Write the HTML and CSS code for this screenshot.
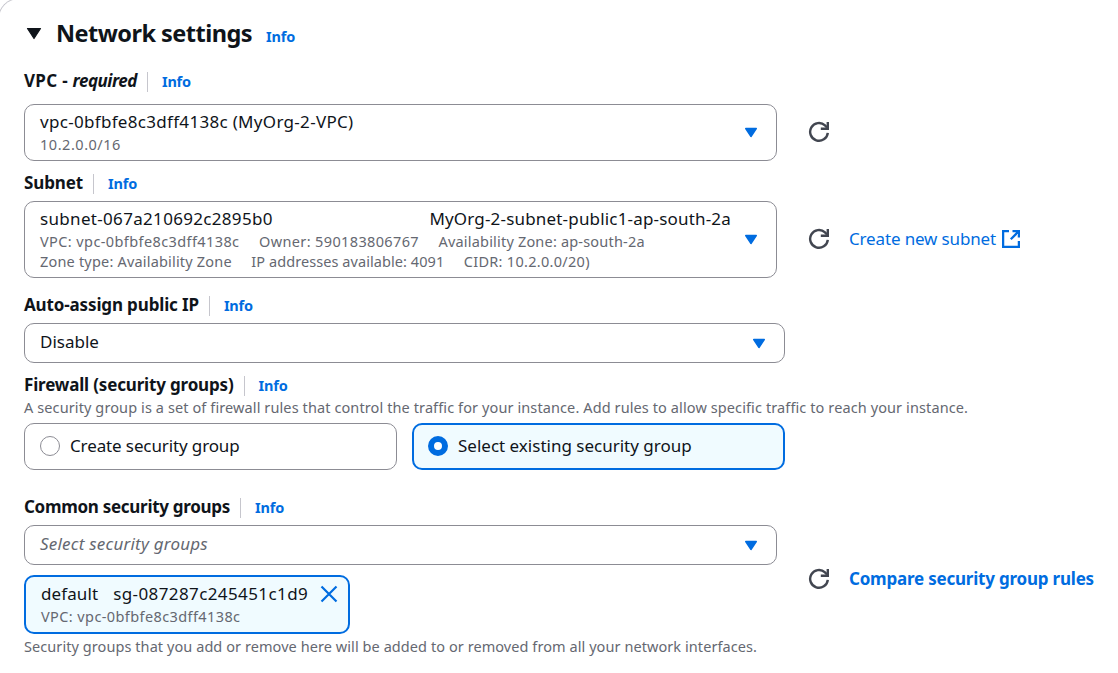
FILE: index.html
```html
<!DOCTYPE html>
<html lang="en">
<head>
<meta charset="utf-8">
<title>Network settings</title>
<link rel="stylesheet" href="styles.css">
</head>
<body>
<svg class="defs" aria-hidden="true">
  <symbol id="caret" viewBox="0 0 14 11"><path d="M1.7 1.5h10.6L7 9.5z" fill="currentColor" stroke="currentColor" stroke-width="1.4" stroke-linejoin="round"/></symbol>
  <symbol id="refresh" viewBox="0 0 22 22"><path d="M19.8 11.8A8.85 8.85 0 1 1 17 4.4l2 2.1" fill="none" stroke="currentColor" stroke-width="2.4"/><path d="M19.8 1v6.7h-7" fill="none" stroke="currentColor" stroke-width="2.4"/></symbol>
</svg>
<main class="card">
  <header class="header">
    <svg class="toggle" viewBox="0 0 16 13"><path d="M1.5 1.5h13L8 11.5z" fill="currentColor" stroke="currentColor" stroke-width="1.2" stroke-linejoin="round"/></svg>
    <h1 class="title">Network settings</h1>
    <a class="info">Info</a>
  </header>

  <section class="field field-vpc">
    <div class="label-row"><h2 class="label"><span class="label-vpc">VPC - </span><em class="required">required</em></h2><a class="info divided">Info</a></div>
    <div class="control-row">
      <div class="select select-vpc">
        <div class="select-text">
          <div class="value vpc-name">vpc-0bfbfe8c3dff4138c (MyOrg-2-VPC)</div>
          <div class="meta cidr-value">10.2.0.0/16</div>
        </div>
        <svg class="caret"><use href="#caret"/></svg>
      </div>
      <svg class="refresh"><use href="#refresh"/></svg>
    </div>
  </section>

  <section class="field field-subnet">
    <div class="label-row"><h2 class="label label-subnet">Subnet</h2><a class="info divided">Info</a></div>
    <div class="control-row">
      <div class="select select-subnet">
        <div class="select-text">
          <div class="value split"><span class="subnet-id">subnet-067a210692c2895b0</span><span class="subnet-name">MyOrg-2-subnet-public1-ap-south-2a</span></div>
          <div class="meta tags"><span class="vpc-tag">VPC: vpc-0bfbfe8c3dff4138c</span><span class="owner-tag">Owner: 590183806767</span><span class="zone-tag">Availability Zone: ap-south-2a</span></div>
          <div class="meta tags"><span class="zone-tag">Zone type: Availability Zone</span><span class="ip-tag">IP addresses available: 4091</span><span class="cidr-tag">CIDR: 10.2.0.0/20)</span></div>
        </div>
        <svg class="caret"><use href="#caret"/></svg>
      </div>
      <svg class="refresh"><use href="#refresh"/></svg>
      <a class="link create-link">Create new subnet<svg class="external" viewBox="1 1 18 18"><path d="M8 2.1H2.1v15.8h15.8v-6M11.5 2.1h6.4v6.4M17.9 2.1L9.8 10.2" fill="none" stroke="currentColor" stroke-width="2.3"/></svg></a>
    </div>
  </section>

  <section class="field field-ip">
    <div class="label-row"><h2 class="label label-ip">Auto-assign public IP</h2><a class="info divided">Info</a></div>
    <div class="select select-wide">
      <div class="value">Disable</div>
      <svg class="caret"><use href="#caret"/></svg>
    </div>
  </section>

  <section class="field field-firewall">
    <div class="label-row"><h2 class="label label-firewall">Firewall (security groups)</h2><a class="info divided">Info</a></div>
    <p class="description">A security group is a set of firewall rules that control the traffic for your instance. Add rules to allow specific traffic to reach your instance.</p>
    <div class="tiles">
      <div class="tile"><span class="radio"></span><span class="create-text">Create security group</span></div>
      <div class="tile selected"><span class="radio"></span><span>Select existing security group</span></div>
    </div>
  </section>

  <section class="field field-groups">
    <div class="label-row"><h2 class="label label-groups">Common security groups</h2><a class="info divided">Info</a></div>
    <div class="control-row">
      <div class="stack">
        <div class="select">
          <div class="value placeholder">Select security groups</div>
          <svg class="caret"><use href="#caret"/></svg>
        </div>
        <div class="token">
          <div>
            <div class="value token-name"><span class="group-name">default</span><span class="group-id">sg-087287c245451c1d9</span></div>
            <div class="meta vpc-tag">VPC: vpc-0bfbfe8c3dff4138c</div>
          </div>
          <svg class="close" viewBox="0 0 18 18"><path d="M1.5 1.5l15 15M16.5 1.5l-15 15" fill="none" stroke="currentColor" stroke-width="2.2"/></svg>
        </div>
      </div>
      <svg class="refresh"><use href="#refresh"/></svg>
      <a class="link compare-link">Compare security group rules</a>
    </div>
    <p class="help">Security groups that you add or remove here will be added to or removed from all your network interfaces.</p>
  </section>
</main>
</body>
</html>
```

FILE: styles.css
```css
* { box-sizing: border-box; }

body {
  margin: 0;
  overflow: hidden;
  background: #fff;
  color: #0f141a;
  font: 17px/22px "Noto Sans", sans-serif;
  white-space: nowrap;
}

h1, h2, p { margin: 0; }

.defs { display: none; }

.card {
  margin: -2px 0 0 -2px;
  width: 1120px;
  height: 675px;
  padding: 18px 0 0 25px;
  border: 1px solid #c6c6cd;
  border-width: 1px 0 0 1px;
  border-radius: 21px 0 0 0;
}

.header { display: flex; height: 32px; align-items: center; padding-left: 2px; }
.toggle { width: 16px; height: 13px; margin: 1px 14px 0 0; }
.title { font-size: 23.5px; line-height: 32px; letter-spacing: -0.53px; }
.header .info { margin-left: 14px; padding-top: 6px; }

.info {
  height: 20px;
  color: #006ce0;
  font-size: 14.5px;
  font-weight: 700;
  line-height: 18px;
  letter-spacing: -0.19px;
}
.header .info { height: auto; }
.info.divided { margin-left: 10px; padding-left: 14px; border-left: 1px solid #c6c6cd; }

.label-row { display: flex; height: 20px; align-items: center; margin-bottom: 7px; }
.label { font-size: 17px; font-weight: 700; line-height: 20px; margin-top: -2px; }
.label-vpc { letter-spacing: 0.3px; white-space: pre; }
.required { letter-spacing: -0.48px; }
.label-subnet { letter-spacing: -0.12px; }
.label-ip { letter-spacing: -0.14px; }
.label-firewall { letter-spacing: -0.17px; }
.label-groups { letter-spacing: -0.29px; }

.field-vpc { margin-top: 23px; }
.field-vpc .label-row { margin-bottom: 12px; }
.field-subnet { margin-top: 13px; }
.field-ip { margin-top: 18px; }
.field-firewall { margin-top: 13px; }
.field-firewall .label-row { margin-bottom: 1px; }
.field-groups { margin-top: 28px; }

.control-row { display: flex; align-items: center; }

.select {
  display: flex;
  width: 753px;
  height: 40px;
  align-items: center;
  justify-content: space-between;
  padding: 0 18px 0 15px;
  border: 1px solid #8c8c94;
  border-radius: 10px;
}
.select-vpc { height: 57px; }
.select-subnet { height: 77px; }
.select-wide { width: 761px; }
.select > .value { padding-bottom: 2px; }
.select-text { display: flex; flex-direction: column; }
.value + .meta { margin-top: 1px; }
.caret { flex: none; width: 14px; height: 11px; color: #006ce0; }

.meta { color: #656871; font-size: 14.5px; line-height: 20px; }
.tags { display: flex; gap: 19.5px; }
.split { display: flex; width: 691px; justify-content: space-between; }
.vpc-name { letter-spacing: 0.31px; }
.cidr-value { letter-spacing: 0.53px; }
.subnet-id { letter-spacing: 0.32px; }
.subnet-name { letter-spacing: 0.18px; }
.vpc-tag { letter-spacing: 0.4px; }
.owner-tag { letter-spacing: 0.37px; }
.zone-tag { letter-spacing: 0.19px; }
.ip-tag { letter-spacing: 0.07px; }
.cidr-tag { letter-spacing: 0.29px; }

.refresh { flex: none; width: 22px; height: 22px; margin: 0 0 1px 31px; color: #424650; }
.link { display: flex; align-items: center; margin: 0 0 1px 19px; color: #006ce0; }
.create-link { letter-spacing: -0.15px; }
.compare-link { font-weight: 700; letter-spacing: -0.21px; }
.external { width: 18px; height: 18px; margin-left: 6px; }

.description, .help { color: #656871; font-size: 14.5px; line-height: 20px; }
.description { letter-spacing: 0.105px; }
.help { margin-top: 2px; letter-spacing: 0.071px; }

.tiles { display: flex; gap: 15px; margin-top: 6px; }
.tile {
  display: flex;
  width: 373px;
  height: 47px;
  align-items: center;
  gap: 10px;
  padding: 0 15px 1px;
  border: 1px solid #8c8c94;
  border-radius: 10px;
}
.tile.selected { padding: 0 14px 1px; border: 2px solid #006ce0; background: #f0fbff; }
.create-text { letter-spacing: -0.12px; }
.radio { width: 20px; height: 20px; border: 1px solid #8c8c94; border-radius: 50%; background: #fff; }
.selected .radio { border: 6px solid #006ce0; }

.placeholder { color: #656871; font-style: italic; letter-spacing: 0.22px; }

.token {
  display: flex;
  width: 326px;
  height: 59px;
  margin-top: 10px;
  align-items: flex-start;
  justify-content: space-between;
  padding: 6px 10px 0 15px;
  border: 2px solid #006ce0;
  border-radius: 10px;
  background: #f0fbff;
}
.token-name { display: flex; gap: 15px; }
.group-name { letter-spacing: 0.1px; }
.group-id { letter-spacing: 0.4px; }
.close { width: 18px; height: 18px; margin-top: 2px; color: #006ce0; }
```
